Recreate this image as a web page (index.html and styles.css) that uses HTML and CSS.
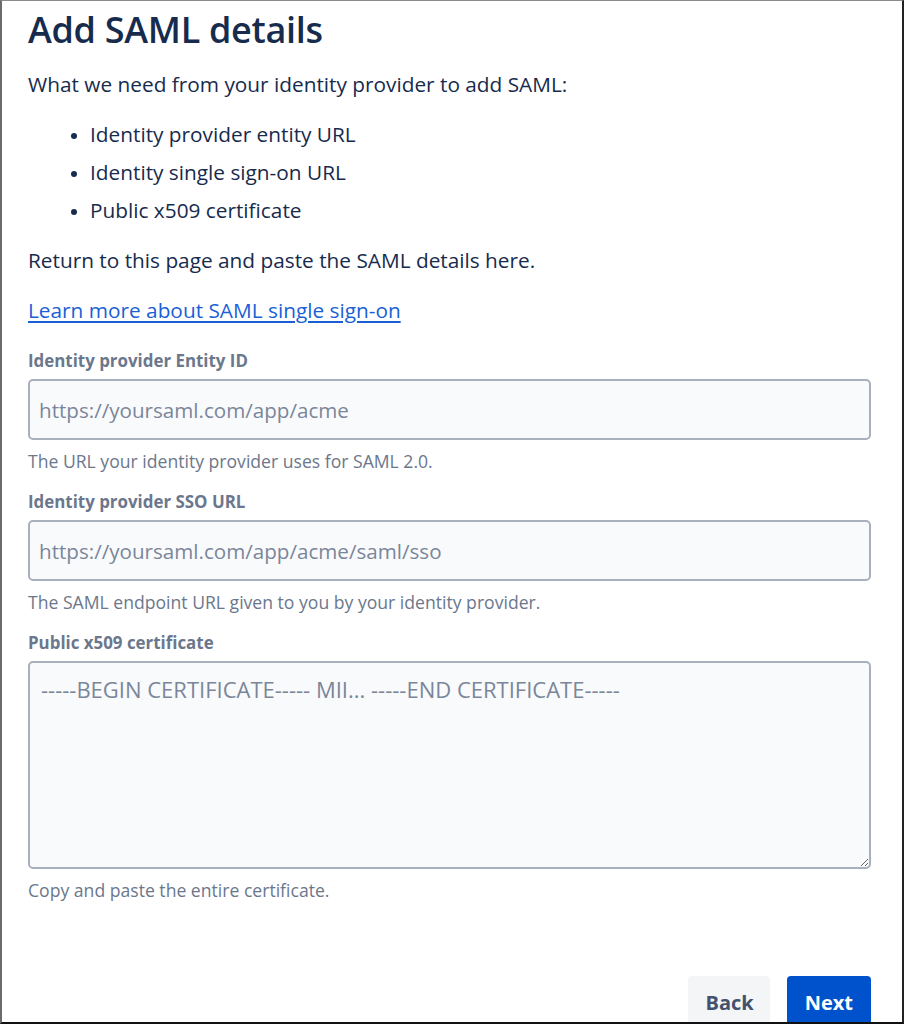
FILE: index.html
```html
<!DOCTYPE html>
<html lang="en">
<head>
<meta charset="utf-8">
<title>Add SAML details</title>
<link rel="stylesheet" href="styles.css">
</head>
<body>
<div class="frame">
  <h1 class="title">Add SAML details</h1>
  <p class="text intro">What we need from your identity provider to add SAML:</p>
  <ul class="needs">
    <li>Identity provider entity URL</li>
    <li>Identity single sign-on URL</li>
    <li>Public x509 certificate</li>
  </ul>
  <p class="text return">Return to this page and paste the SAML details here.</p>
  <p class="text linkrow"><a class="link" href="#">Learn more about SAML single sign-on</a></p>

  <div class="field">
    <label class="label" for="entity">Identity provider Entity ID</label>
    <input class="input" id="entity" type="text" placeholder="https://yoursaml.com/app/acme">
    <div class="help">The URL your identity provider uses for SAML 2.0.</div>
  </div>

  <div class="field">
    <label class="label" for="sso">Identity provider SSO URL</label>
    <input class="input" id="sso" type="text" placeholder="https://yoursaml.com/app/acme/saml/sso">
    <div class="help">The SAML endpoint URL given to you by your identity provider.</div>
  </div>

  <div class="field">
    <label class="label" for="cert">Public x509 certificate</label>
    <textarea class="area" id="cert" placeholder="-----BEGIN CERTIFICATE----- MII... -----END CERTIFICATE-----"></textarea>
    <div class="help">Copy and paste the entire certificate.</div>
  </div>

  <div class="actions">
    <button class="btn btn-back" type="button">Back</button>
    <button class="btn btn-next" type="button">Next</button>
  </div>
</div>
</body>
</html>
```
FILE: styles.css
```css
html, body {
  margin: 0;
  padding: 0;
  background: #ffffff;
}
body {
  font-family: "Open Sans", "Noto Sans", sans-serif;
  color: #172B4D;
}
.frame {
  box-sizing: border-box;
  width: 904px;
  height: 1024px;
  overflow: hidden;
  border-top: 1px solid #8a8a8a;
  border-left: 2px solid #6b6b6b;
  border-right: 2px solid #222222;
  border-bottom: 2px solid #111111;
  padding: 0 31px 0 26px;
}
.title {
  margin: 9px 0 0;
  font-size: 36px;
  line-height: 40px;
  font-weight: 600;
  color: #172B4D;
  letter-spacing: -0.3px;
}
.text {
  margin: 0;
  font-size: 20.8px;
  line-height: 28px;
  color: #172B4D;
}
.intro { margin-top: 20px; }
.needs {
  margin: 17px 0 0;
  padding-left: 62px;
  font-size: 20.8px;
  line-height: 38px;
}
.needs li { padding-left: 0; }
.needs li::marker { font-size: 18px; }
.return { margin-top: 17px; }
.linkrow { margin-top: 22px; }
.link {
  color: #1a5fd6;
  text-decoration: underline;
  text-underline-offset: 3px;
}
.field {
  display: flex;
  flex-direction: column;
}
.field:first-of-type { margin-top: 25px; }
.label {
  font-size: 16.9px;
  line-height: 24px;
  font-weight: 700;
  color: #6B778C;
}
.input, .area {
  box-sizing: border-box;
  margin-top: 6px;
  width: 100%;
  border: 2px solid #A8B0BE;
  border-radius: 5px;
  background: #F9FAFC;
  font-family: "Open Sans", "Noto Sans", sans-serif;
  font-size: 20.6px;
  color: #172B4D;
  outline: none;
}
.input {
  height: 61px;
  padding: 0 9px;
}
.area {
  height: 208px;
  padding: 11px 11px;
  resize: vertical;
  line-height: 30px;
  font-size: 22px;
}
.input::placeholder, .area::placeholder {
  color: #7A869A;
  opacity: 1;
}
.help {
  margin-top: 10px;
  font-size: 17.6px;
  line-height: 22px;
  color: #6B778C;
}
.field + .field { margin-top: 18px; }
.actions {
  display: flex;
  justify-content: flex-end;
  gap: 17px;
  margin-top: 75px;
}
.btn {
  height: 52px;
  border: none;
  border-radius: 4px;
  font-family: "Open Sans", "Noto Sans", sans-serif;
  font-size: 20px;
  font-weight: 700;
  cursor: pointer;
}
.btn-back {
  background: #F4F5F7;
  color: #42526E;
  padding: 0 16px 0 17px;
}
.btn-next {
  background: #0052CC;
  color: #ffffff;
  padding: 0 18px;
}
```
